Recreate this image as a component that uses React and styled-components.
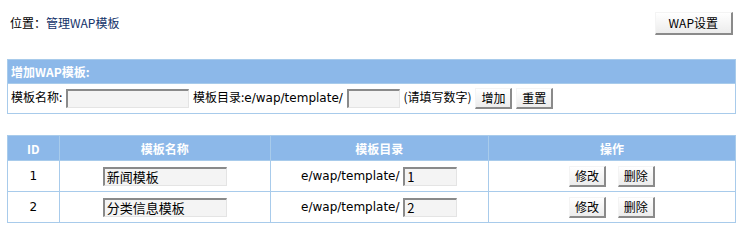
import React from 'react';
import styled, { createGlobalStyle } from 'styled-components';

const Global = createGlobalStyle`
  body {
    margin: 8px 8px 8px 7px;
    background: #fff;
    font-family: "DejaVu Sans", "Noto Sans CJK SC", sans-serif;
    font-size: 12px;
    color: #000;
  }
`;

const TopBar = styled.div`
  display: flex;
  justify-content: space-between;
  align-items: center;
  height: 30px;
  padding: 0 3px 0 3px;
`;

const Where = styled.div`
  line-height: 14px;
  padding-bottom: 1px;
  font-family: "Noto Sans CJK SC", sans-serif;
`;

const Link = styled.a`
  color: #123269;
  text-decoration: none;
`;

const Btn = styled.button`
  font-family: "Noto Sans CJK SC", "DejaVu Sans", sans-serif;
  font-size: 12px;
  line-height: 14px;
  height: ${p => p.$h || 21}px;
  padding: 0 ${p => p.$px || 5}px;
  margin: 0 ${p => p.$mx || 0}px;
  color: #000;
  background: linear-gradient(#ffffff, #ececec);
  border-top: 1px solid #f4f4f4;
  border-left: 1px solid #f4f4f4;
  border-right: 2px solid #8a8a8a;
  border-bottom: 2px solid #8a8a8a;
  vertical-align: middle;
`;

const Grid = styled.table`
  width: 100%;
  border-collapse: separate;
  border-spacing: 1px;
  background: #a8cbeb;
  margin-top: ${p => p.$mt}px;
`;

const Head = styled.td`
  background: #8cb8e9;
  color: #fff;
  font-weight: bold;
  height: ${p => p.$h || 22}px;
  padding: 0 3px;
  text-align: ${p => p.$align || 'center'};
  font-family: "Noto Sans CJK SC", sans-serif;
`;

const Cell = styled.td`
  background: #fff;
  height: ${p => p.$h || 30}px;
  padding: 0 3px;
  text-align: ${p => p.$align || 'center'};
  white-space: nowrap;
`;

const Field = styled.input`
  box-sizing: border-box;
  width: ${p => p.$w}px;
  height: 19px;
  padding: 0 2px;
  margin: 0 ${p => p.$mx || 0}px;
  font-family: "Noto Sans CJK SC", "DejaVu Sans", sans-serif;
  font-size: 13px;
  color: #000;
  background: #f4f4f4;
  border-top: 2px solid #8a8a8a;
  border-left: 2px solid #8a8a8a;
  border-right: 1px solid #e4e4e4;
  border-bottom: 1px solid #e4e4e4;
  vertical-align: middle;
  outline: none;
`;

const Zh = styled.span`
  font-family: "Noto Sans CJK SC", sans-serif;
`;

const rows = [
  { id: 1, name: '新闻模板', dir: '1' },
  { id: 2, name: '分类信息模板', dir: '2' },
];

export default function App() {
  return (
    <>
      <Global />
      <TopBar>
        <Where>
          位置：<Link href="#">管理WAP模板</Link>
        </Where>
        <Btn $h={23} $px={13}>WAP设置</Btn>
      </TopBar>

      <Grid $mt={21}>
        <tbody>
          <tr>
            <Head $align="left" $h={23}>增加WAP模板:</Head>
          </tr>
          <tr>
            <Cell $align="left" $h={29}>
              <Zh>模板名称:</Zh> <Field $w={123} />{' '}
              <Zh>模板目录:</Zh>e/wap/template/ <Field $w={53} /> <Zh>(请填写数字)</Zh>{' '}
              <Btn>增加</Btn> <Btn>重置</Btn>
            </Cell>
          </tr>
        </tbody>
      </Grid>

      <Grid $mt={21}>
        <tbody>
          <tr>
            <Head style={{ width: '7%' }} $h={24}>ID</Head>
            <Head style={{ width: '29%' }} $h={24}>模板名称</Head>
            <Head style={{ width: '30%' }} $h={24}>模板目录</Head>
            <Head style={{ width: '34%' }} $h={24}>操作</Head>
          </tr>
          {rows.map(r => (
            <tr key={r.id}>
              <Cell>{r.id}</Cell>
              <Cell>
                <Field $w={124} defaultValue={r.name} />
              </Cell>
              <Cell>
                e/wap/template/ <Field $w={54} defaultValue={r.dir} />
              </Cell>
              <Cell>
                <Btn $mx={4}>修改</Btn> <Btn $mx={4}>删除</Btn>
              </Cell>
            </tr>
          ))}
        </tbody>
      </Grid>
    </>
  );
}
